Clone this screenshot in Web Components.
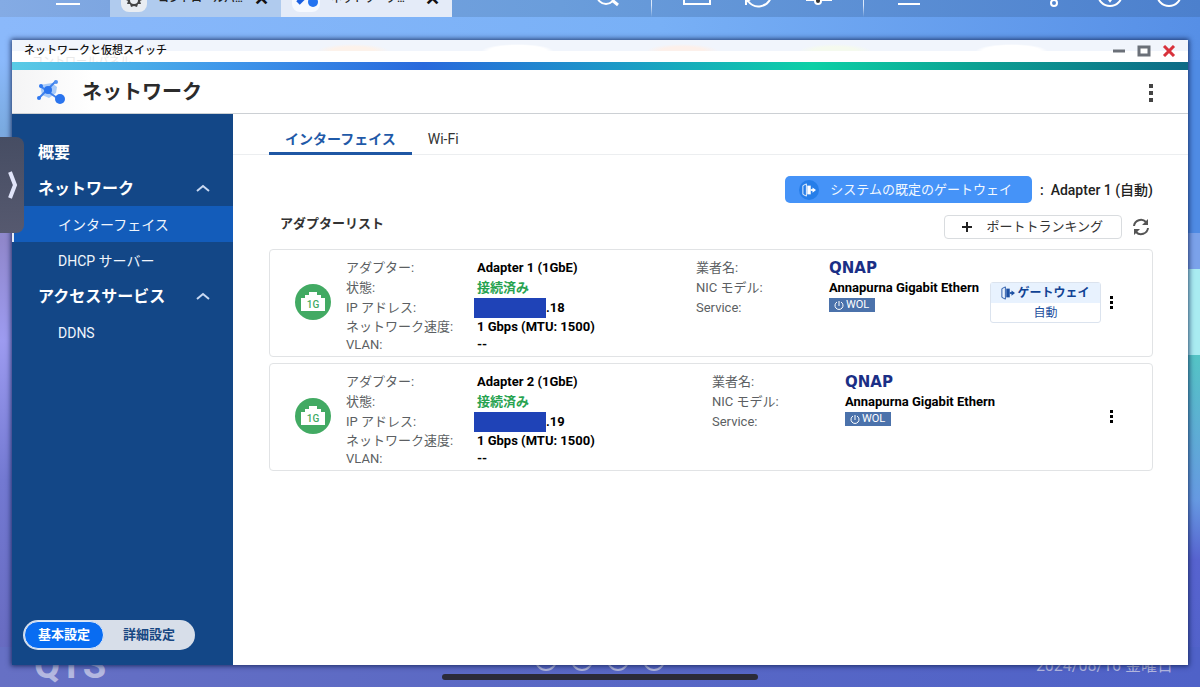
<!DOCTYPE html>
<html lang="ja">
<head>
<meta charset="utf-8">
<title>ネットワークと仮想スイッチ</title>
<style>
html, body { margin: 0; }
body { font-family: Roboto, "Noto Sans CJK JP", sans-serif; font-size: 13px; color: #222; min-height: 100vh; overflow: hidden; }
</style>
</head>
<body>
<qts-desktop>
  <task-bar slot="top"></task-bar>
  <app-window heading="ネットワークと仮想スイッチ" app="ネットワーク" ghost="コントロールパネル">
    <side-nav slot="side">
      <nav-item level="top" label="概要"></nav-item>
      <nav-item level="top" label="ネットワーク" expandable></nav-item>
      <nav-item label="インターフェイス" current></nav-item>
      <nav-item label="DHCP サーバー"></nav-item>
      <nav-item level="top" label="アクセスサービス" expandable></nav-item>
      <nav-item label="DDNS"></nav-item>
      <mode-switch slot="foot"></mode-switch>
    </side-nav>
    <tab-strip></tab-strip>
    <interface-panel>
      <adapter-card name="Adapter 1 (1GbE)" ip=".18" gateway></adapter-card>
      <adapter-card name="Adapter 2 (1GbE)" ip=".19"></adapter-card>
    </interface-panel>
  </app-window>
  <desk-footer slot="bottom"></desk-footer>
  <drawer-handle slot="overlay"></drawer-handle>
</qts-desktop>

<script>
const define = (name, render) => customElements.define(name, class extends HTMLElement {
  connectedCallback() {
    if (this.shadowRoot) return;
    this.attachShadow({ mode: 'open' }).innerHTML =
      '<style>:host,*{box-sizing:border-box}button{font:inherit;color:inherit;background:none;border:0;padding:0;margin:0}svg{display:block}</style>' + render(this);
  }
});

/* Desktop: wallpaper, task bar, window area, footer */
define('qts-desktop', () => `
<style>
:host {
  display: grid; grid-template-rows: 17px 1fr 22px; min-height: 100vh; position: relative;
  background:
    linear-gradient(90deg, #8bb9fb, #78b0f6 55%, #568fe6) top / 100% 60px no-repeat,
    linear-gradient(90deg, #6670c4, #5b69c4 40%, #4f62c8) bottom / 100% 40px no-repeat,
    linear-gradient(180deg, #4f8be4 0 233px, #7ba2ea 233px 269px, #a9ecf1 269px 355px, #54c4c5 355px, #6699e2 500px, #5763cf 560px, #5062c8) right / 40px 100% no-repeat,
    linear-gradient(180deg, #8bb9fb 60px, #7aaae0 130px, #9087cb 240px, #9d9bf0 340px, #7379d2 480px, #6568bd);
}
main { display: grid; padding: 23px 12px 0; position: relative; z-index: 1; min-width: 0; }
</style>
<slot name="top"></slot><main><slot></slot></main><slot name="bottom"></slot><slot name="overlay"></slot>`);

const trayIcons = {
  search: ['検索', '<circle cx="14" cy="18" r="9"/><path d="M20 23l6 5" stroke-width="3"/>'],
  window: ['ボリューム', '<path d="M2 6V27H28V6"/>'],
  sync: ['バックグラウンドタスク', '<path d="M3 16v12M3 25l6-4M5 24a13 13 0 0 0 23-4"/>'],
  bell: ['通知', '<path d="M2 23h26"/><circle cx="14" cy="24" r="3" fill="#333"/>'],
  user: ['ユーザー', '<path d="M4 27h22"/>'],
  more: ['その他', '<path d="M14 12v10"/><circle cx="14" cy="26" r="3"/>'],
  info: ['情報', '<circle cx="12" cy="17" r="12"/><path d="M9 20l3 4 3-4z" fill="#fff"/>'],
  help: ['ヘルプ', '<circle cx="13" cy="17" r="12"/>']
};
const tray = k => `<button class="cell" aria-label="${trayIcons[k][0]}"><svg width="30" height="34" fill="none" stroke="#fff" stroke-width="2">${trayIcons[k][1]}</svg></button>`;
define('task-bar', () => `
<style>
:host { display: flex; align-items: flex-end; overflow: hidden; color: #222; background: linear-gradient(90deg, #84abe4 0, #7da6e1 110px, #6a9ddb 560px, #4c80cd); }
.menu { width: 110px; height: 40px; padding-left: 55px; flex: none; }
.tab { display: flex; align-items: flex-end; width: 171px; height: 44px; flex: none; padding: 0 12px 5px 11px; background: #b0cbee; text-align: left; font-size: 11px; line-height: 20px; }
.tab.on { background: #e4ebf8; }
.tab span { flex: 1; padding: 0 0 3px 11px; white-space: nowrap; font-weight: 500; }
.tab b { padding-bottom: 3px; font-size: 18px; color: #111; }
.tray { display: flex; align-items: flex-end; flex: 1; padding-left: 124px; }
.cell { width: 61px; height: 34px; display: flex; justify-content: center; flex: none; margin-bottom: 6px; }
i { width: 1px; height: 40px; margin: 0 14px; background: linear-gradient(#dce9fb 70%, #dce9fb00); flex: none; }
.end { display: flex; margin-left: auto; }
.end .cell { width: 58px; }
</style>
<button class="menu" aria-label="メインメニュー"><svg width="26" height="40" stroke="#fff" stroke-width="2"><path d="M1 22H25M1 27H25"/></svg></button>
<button class="tab"><svg width="26" height="30"><rect width="26" height="30" rx="8" fill="#e9edf2"/><path d="M13 10a8 8 0 0 1 8 8l-2 1 1 3-3 0-1 3-3-1-3 1-1-3-3 0 1-3-2-1a8 8 0 0 1 8-8z" fill="#444"/><circle cx="13" cy="18" r="4" fill="#e9edf2"/></svg><span>コントロールパ…</span><b>✕</b></button>
<button class="tab on"><svg width="28" height="30"><rect width="28" height="30" rx="8" fill="#f6f9ff"/><path d="M6 21l12-12" stroke="#1b5fe0" stroke-width="5"/><circle cx="21" cy="20" r="5" fill="#2373f0"/></svg><span>ネットワーク…</span><b>✕</b></button>
<div class="tray">${tray('search')}<i></i>${tray('window')}${tray('sync')}${tray('bell')}<i></i>${tray('user')}<div class="end">${tray('more')}${tray('info')}${tray('help')}</div></div>`);

/* Application window: caption, colour rule, app header, body */
define('app-window', el => `
<style>
:host { display: flex; flex-direction: column; min-width: 0; background: #fff; box-shadow: 0 0 5px 1px #0b1c4acc; }
.caption { position: relative; display: flex; align-items: center; height: 22px; padding: 0 12px; overflow: hidden;
  background:
    radial-gradient(ellipse 36px 7px at 43% 11px, #fff 80%, #fff0) top / 100% 11px no-repeat,
    radial-gradient(ellipse 36px 7px at 85% 11px, #fff 80%, #fff0) top / 100% 11px no-repeat,
    radial-gradient(ellipse 36px 7px at 57% 11px, #fdf0ea 60%, #fff0) top / 100% 11px no-repeat,
    radial-gradient(ellipse 36px 7px at 29% 11px, #fdf2ea 60%, #fff0) top / 100% 11px no-repeat,
    radial-gradient(ellipse 36px 7px at 70% 11px, #f5faee 60%, #fff0) top / 100% 11px no-repeat,
    linear-gradient(#f1f5fc 11px, #fff 11px); }
h1 { margin: 0; font-size: 11px; line-height: 20px; font-weight: 500; flex: 1; position: relative; color: #111; }
.ghost { position: absolute; left: 20px; top: 14px; font-size: 11px; line-height: 16px; color: #e9e9e9; }
.ctl { display: flex; gap: 11px; align-items: center; }
.rule { height: 8px; background: linear-gradient(90deg, #59cbe5, #3f97ea 18%, #2869dc 35%, #1b9bc6 52%, #0cd0a6 68%, #0ba193 82%, #0d6a86); }
header { display: flex; align-items: center; height: 44px; padding: 0 29px 0 24px; border-bottom: 1px solid #ccd0d4; background: linear-gradient(90deg, #f4f4f5, #fff 80px); }
h2 { flex: 1; margin: 0 0 0 16px; font-size: 20px; line-height: 28px; font-weight: 700; color: #2b2b2b; }
.body { display: flex; flex: 1; min-height: 0; }
.content { flex: 1; min-width: 0; }
</style>
<div class="caption"><span class="ghost" aria-hidden="true">${el.getAttribute('ghost')}</span><h1>${el.getAttribute('heading')}</h1>
<div class="ctl">
<button aria-label="最小化"><svg width="14" height="12"><path d="M1 6H13" stroke="#6b7078" stroke-width="3"/></svg></button>
<button aria-label="最大化"><svg width="14" height="12"><rect x="2" y="2" width="10" height="8" fill="#fff" stroke="#6b7078" stroke-width="3"/></svg></button>
<button aria-label="閉じる"><svg width="14" height="12"><path d="M2 1l10 10M12 1L2 11" stroke="#d8323c" stroke-width="3"/></svg></button>
</div></div>
<div class="rule"></div>
<header>
<svg width="30" height="26" viewBox="0 0 30 26"><path d="M4 6l12-2 5 4-1 6-7 5-7-3z" fill="#a9cbf8"/><path d="M4 7l20 14M3 19L20 2" stroke="#3f82ee" stroke-width="2"/><circle cx="5" cy="7" r="2" fill="#2f78f0"/><circle cx="20" cy="3" r="2" fill="#5190ef"/><circle cx="3" cy="19" r="2" fill="#2f78f0"/><circle cx="12" cy="11" r="4" fill="#2a74ee"/><circle cx="24" cy="20" r="5" fill="#2a74ee"/></svg>
<h2>${el.getAttribute('app')}</h2>
<button aria-label="メニュー"><svg width="16" height="20" fill="#444"><path d="M6 2h4v4h-4zM6 9h4v4h-4zM6 16h4v4h-4z"/></svg></button>
</header>
<div class="body"><slot name="side"></slot><div class="content"><slot></slot></div></div>`);

define('side-nav', () => `
<style>
:host { display: flex; flex-direction: column; width: 221px; flex: none; background: #134787; color: #fff; }
nav { flex: 1; padding-top: 20px; }
footer { padding: 0 11px 15px; }
</style><nav><slot></slot></nav><footer><slot name="foot"></slot></footer>`);

define('nav-item', el => `
<style>
:host { display: block; }
a { display: flex; align-items: center; height: 36px; padding: 2px 22px 0 46px; color: #f0f5fc; text-decoration: none; font-size: 14px; line-height: 24px; }
:host([level=top]) a { padding-left: 26px; font-size: 16px; font-weight: 700; color: #fff; }
:host([current]) a { background: #135cba; box-shadow: inset 2px 0 #e6edf8; }
span { flex: 1; }
</style>
<a href="#"${el.hasAttribute('current') ? ' aria-current="page"' : ''}><span>${el.getAttribute('label')}</span>${el.hasAttribute('expandable') ? '<svg width="16" height="10" fill="none" stroke="#c9d9f2" stroke-width="2"><path d="M2 7l6-5 6 5"/></svg>' : ''}</a>`);

define('mode-switch', () => `
<style>
:host { display: flex; width: 172px; height: 30px; border-radius: 15px; background: #d7dee9; padding: 1px; font-size: 13px; font-weight: 700; line-height: 20px; color: #174782; }
button { flex: 1; border-radius: 14px; height: 28px; }
button.on { flex: none; width: 80px; background: #086cf2; color: #fff; border: 1px solid #dce8fa; }
</style><button class="on" aria-pressed="true">基本設定</button><button aria-pressed="false">詳細設定</button>`);

define('tab-strip', () => `
<style>
:host { display: flex; height: 41px; padding-left: 36px; border-bottom: 1px solid #eceef0; }
a { height: 41px; padding: 0 16px; font-size: 14px; line-height: 50px; color: #333; text-decoration: none; }
a.on { font-weight: 700; color: #1f5aa8; border-bottom: 3px solid #1f57a4; }
</style><a class="on" href="#" aria-current="page">インターフェイス</a><a href="#">Wi-Fi</a>`);

/* Open door with an arrow leading out of it */
const door = (c, size) => `<svg width="${size}" height="${size}" viewBox="0 0 16 16" fill="none" stroke="${c}"><path d="M1 3l4-2v14l-4-2z"/><path d="M6 3h4v10H6z" fill="${c}" stroke="none"/><path d="M10 8h4" stroke-width="2"/><path d="M12 5l4 3-4 3z" fill="${c}" stroke="none"/></svg>`;

define('interface-panel', () => `
<style>
:host { display: block; padding: 21px 35px 24px 36px; }
.row { display: flex; align-items: center; justify-content: flex-end; }
.gw { display: flex; align-items: center; gap: 11px; height: 27px; padding: 0 20px 0 14px; border-radius: 5px; background: #4593f8; color: #f2f8ff; line-height: 20px; }
.disc { display: grid; place-items: center; width: 20px; height: 20px; border-radius: 50%; background: #267ee9; }
.def { margin-left: 8px; font-size: 14px; line-height: 20px; font-weight: 500; }
.tools { padding-top: 12px; }
h3 { flex: 1; align-self: flex-start; margin: 0; padding-left: 11px; font-size: 13px; line-height: 18px; font-weight: 700; color: #333; }
.trunk { display: flex; align-items: center; gap: 13px; height: 24px; padding: 0 18px 0 16px; border: 1px solid #d9dcdf; border-radius: 4px; line-height: 20px; color: #333; }
.re { margin-left: 9px; padding-right: 2px; }
.list { display: grid; gap: 6px; padding-top: 10px; }
</style>
<div class="row"><button class="gw"><span class="disc">${door('#fff', 14)}</span>システムの既定のゲートウェイ</button><span class="def">:&nbsp; Adapter 1 (自動)</span></div>
<div class="row tools"><h3>アダプターリスト</h3>
<button class="trunk"><svg width="12" height="12" stroke="#222" stroke-width="2"><path d="M6 1v10M1 6h10"/></svg>ポートトランキング</button>
<button class="re" aria-label="更新"><svg width="20" height="20" viewBox="0 0 20 20" fill="none" stroke="#555" stroke-width="2"><path d="M3 9a7 7 0 0 1 12-4M17 11a7 7 0 0 1-12 4"/><path d="M17 2v6h-6zM3 18v-6h6z" fill="#555" stroke="none"/></svg></button></div>
<div class="list"><slot></slot></div>`);

define('adapter-card', el => {
  const gw = el.hasAttribute('gateway');
  return `
<style>
:host { display: grid; grid-template-columns: 51px 366fr 389fr 20px; border: 1px solid #e1e3e5; border-radius: 4px; padding: 8px 31px 2px 25px; }
:host([gateway]) { grid-template-columns: 51px 350fr 284fr 121px 20px; }
.port, .gate, .dots { align-self: center; margin-bottom: 8px; }
dl { display: grid; grid-template-columns: 128px 1fr; grid-template-rows: 20px 20px 20px 18px 18px; align-items: center; margin: 0; font-size: 13px; line-height: 18px; min-width: 0; }
dl.nic { grid-template-columns: 130px 1fr; }
dt { color: #5c5f63; white-space: nowrap; }
dd { margin: 0; padding-left: 3px; color: #000; font-weight: 700; white-space: nowrap; }
.ok { color: #27a350; }
.ip { display: flex; align-items: center; padding: 0; }
.mask { width: 72px; height: 20px; background: #1f43b7; }
.logo { font: 700 15px/16px "DejaVu Sans", sans-serif; color: #1b2f86; }
.svc { align-self: start; }
.wol { display: flex; align-items: center; gap: 2px; width: 46px; height: 14px; padding-left: 5px; background: #4b72ab; color: #fff; font-size: 11px; line-height: 14px; font-weight: 400; }
.gate { justify-self: end; width: 111px; border: 1px solid #dbe3ee; border-radius: 3px; font-size: 12px; line-height: 20px; color: #1c4f9e; text-align: center; }
.gate b { display: flex; justify-content: center; align-items: center; gap: 2px; height: 20px; background: #e8f2fe; color: #114394; }
.gate span { display: block; height: 19px; }
.dots { justify-self: end; }
</style>
<svg class="port" width="36" height="36" role="img" aria-label="1G"><circle cx="18" cy="18" r="18" fill="#42aa63"/><path d="M6 27V14h4v-3h4V8h8v3h4v3h4v13z" fill="#fff"/><text x="18" y="24" font-size="10" font-weight="500" fill="#42aa63" text-anchor="middle">1G</text></svg>
<dl>
<dt>アダプター:</dt><dd>${el.getAttribute('name')}</dd>
<dt>状態:</dt><dd class="ok">接続済み</dd>
<dt>IP アドレス:</dt><dd class="ip"><span class="mask"></span>${el.getAttribute('ip')}</dd>
<dt>ネットワーク速度:</dt><dd>1 Gbps (MTU: 1500)</dd>
<dt>VLAN:</dt><dd>--</dd>
</dl>
<dl class="nic">
<dt>業者名:</dt><dd class="logo">QNAP</dd>
<dt>NIC モデル:</dt><dd>Annapurna Gigabit Ethern</dd>
<dt>Service:</dt><dd class="svc"><span class="wol"><svg width="10" height="10" fill="none" stroke="#fff"><path d="M3 2a4 4 0 1 0 4 0M5 1v5"/></svg>WOL</span></dd>
</dl>
${gw ? `<div class="gate"><b>${door('#1b4fa3', 14)}ゲートウェイ</b><span>自動</span></div>` : ''}
<button class="dots" aria-label="操作"><svg width="20" height="16"><path d="M9 2h3v3h-3zM9 7h3v3h-3zM9 12h3v3h-3z"/></svg></button>`;
});

const dock = [1, 2, 3, 4].map(() => '<svg width="24" height="24" fill="none" stroke="#b4b8dc" stroke-width="2"><circle cx="12" cy="12" r="10"/></svg>').join('');
define('desk-footer', () => `
<style>
:host { display: grid; grid-template-columns: 1fr auto 1fr; grid-template-rows: 22px; align-items: end; overflow: hidden; position: relative; height: 22px; padding: 0 27px; color: #b4b8e0; }
b { padding: 0 0 4px 7px; font-size: 38px; line-height: 36px; }
.dock { display: flex; gap: 12px; padding-bottom: 15px; }
time { justify-self: end; font-size: 16px; line-height: 20px; padding-bottom: 11px; }
.home { position: absolute; left: 37%; right: 37%; margin: 0 -2px; bottom: 7px; height: 6px; border-radius: 3px; background: #2b2b39; }
</style>
<b>QTS</b><div class="dock">${dock}</div><time>2024/08/16 金曜日</time><div class="home"></div>`);

define('drawer-handle', () => `
<style>
:host { position: absolute; z-index: 2; left: 0; top: 137px; }
button { display: grid; place-items: center end; width: 24px; height: 96px; padding-right: 6px; border-radius: 0 8px 8px 0; background: linear-gradient(#464d63, #56596f); }
</style><button aria-label="パネルを開く"><svg width="10" height="28" fill="none" stroke="#e1e5fa" stroke-width="4"><path d="M2 1l5 13-5 13"/></svg></button>`);
</script>
</body>
</html>
